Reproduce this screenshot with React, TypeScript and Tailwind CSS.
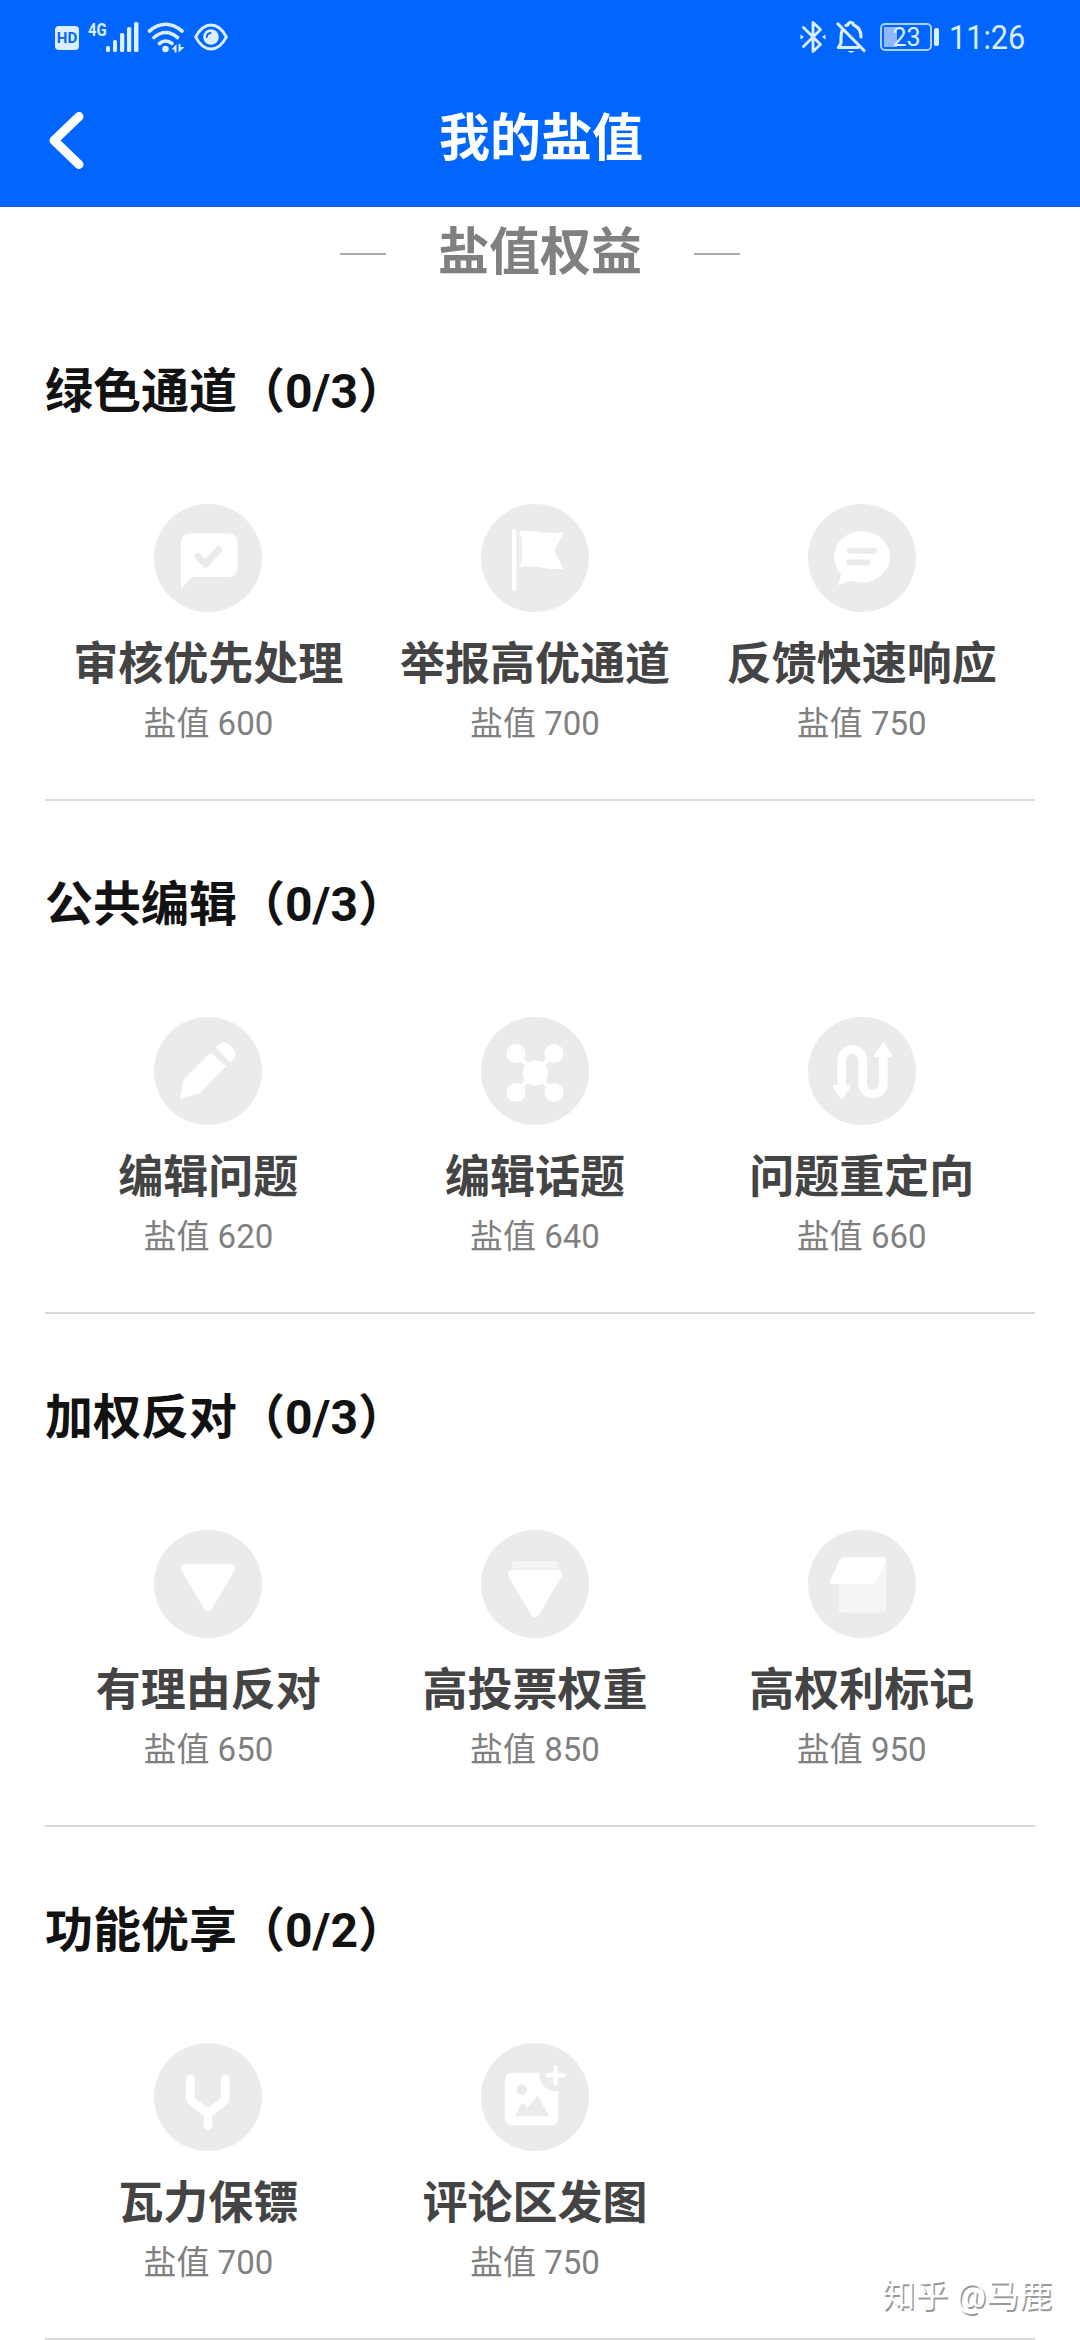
import type { ReactNode } from 'react';

type Privilege = {
  name: string;
  score: number;
  icon: ReactNode;
};

type Group = {
  title: string;
  count: string;
  items: Privilege[];
};

const GREY = '#ebebeb';

const ReviewIcon = (
  <>
    <path d="M35 29.5H75.5a8 8 0 0 1 8 8V65a8 8 0 0 1-8 8H38L28 84q-1 .8-1-1V37.5a8 8 0 0 1 8-8z" fill="#fff" />
    <path d="M44 52.5l7.5 7.5L65 45.5" fill="none" stroke={GREY} strokeWidth="7" strokeLinecap="round" strokeLinejoin="round" />
  </>
);

const FlagIcon = (
  <>
    <rect x="31" y="25" width="4.5" height="62" rx="2.2" fill="#fff" />
    <path d="M38.5 29q0-2 2-2C56 26 66 31 80.5 28.3q2.500-.3 1.300 1.700L73.500 47l8.300 16.500q.8 1.500-1.300 1.600C64 66 56 61 40.500 63q-2 .2-2-1.500z" fill="#fff" />
    <path d="M39.7 32.5V59.5" stroke={GREY} strokeWidth="2" />
  </>
);

const FeedbackIcon = (
  <>
    <ellipse cx="54" cy="52.8" rx="28" ry="25.8" fill="#fff" />
    <path d="M28 63q6 4 4.500 9L30.300 80q-.2 1.500 1.300.9L44 76z" fill="#fff" />
    <path d="M41.5 46.7H66M41.5 58.5H59.5" stroke={GREY} strokeWidth="6" strokeLinecap="round" />
  </>
);

const PencilIcon = (
  <>
    <path d="M57 35.5L72 49.5 47 75Q46 76 44.500 76.500L26 82l3.500-19z" fill="#fff" />
    <path d="M61.5 30.5L64.5 27.5Q69.500 23.500 75 27.500L79.500 32Q83.500 36.500 79.500 42L76 45.500z" fill="#fff" />
  </>
);

const TopicIcon = (
  <>
    <path d="M35 36.5L73 75.5M73 36.5L35 75.5" stroke="#fff" strokeWidth="4.5" />
    <circle cx="54.3" cy="56" r="12.6" fill="#fff" />
    <circle cx="35" cy="36.5" r="9.5" fill="#fff" />
    <circle cx="73" cy="36.5" r="9.5" fill="#fff" />
    <circle cx="35" cy="75.5" r="9.5" fill="#fff" />
    <circle cx="73" cy="75.5" r="9.5" fill="#fff" />
  </>
);

const RedirectIcon = (
  <>
    <path d="M33.7 70V43a10.5 10.5 0 0 1 21 0V66.7a10.3 10.3 0 0 0 20.6 0V38" fill="none" stroke="#fff" strokeWidth="8.7" />
    <path d="M75.3 27l8 12H67.3zM33.7 81l-7.7-12H41.4z" fill="#fff" stroke="#fff" strokeWidth="2.5" strokeLinejoin="round" />
  </>
);

const OpposeIcon = (
  <path d="M31.5 38.2H76.5L54 76.8z" fill="#fff" stroke="#fff" strokeWidth="9" strokeLinejoin="round" />
);

const WeightIcon = (
  <>
    <path d="M34 31H74q3.300 0 3.300 3.500V38.300H30.700V34.500Q30.700 31 34 31z" fill="#f5f5f5" />
    <path d="M31.5 44.3H76.5L54 82.8z" fill="#fff" stroke="#fff" strokeWidth="9" strokeLinejoin="round" />
  </>
);

const MarkIcon = (
  <>
    <path d="M30.7 50L78 30V79a3.7 3.7 0 0 1-3.7 3.7H34.4a3.7 3.7 0 0 1-3.7-3.7z" fill="#f5f5f5" />
    <path d="M36 27.3H75.5Q79 27.3 78 31L68.5 52Q67.5 54 65.5 54H24Q21 54 22 50.5L31.5 30Q33 27.3 36 27.3z" fill="#fff" />
  </>
);

const GuardIcon = (
  <path d="M36.4 36V54.5Q36.4 57.5 38.5 59L54 70.5 69 59Q71.2 57.5 71.2 54.5V36M54 70V83" fill="none" stroke="#fff" strokeWidth="8.6" strokeLinecap="round" />
);

const ImageIcon = (
  <>
    <rect x="24" y="29.7" width="53.3" height="52.6" rx="7" fill="#fff" />
    <circle cx="74.5" cy="32.3" r="16" fill={GREY} />
    <circle cx="41" cy="46.7" r="5.2" fill={GREY} />
    <path d="M34.8 72.7L41.5 60l5 5.5L56.7 53.3 67.4 72.7z" fill={GREY} stroke={GREY} strokeLinejoin="round" />
    <path d="M74.5 24.5V40.2M66.8 32.3H82.2" stroke="#fff" strokeWidth="4.5" strokeLinecap="round" />
  </>
);

const groups: Group[] = [
  {
    title: '绿色通道',
    count: '0/3',
    items: [
      { name: '审核优先处理', score: 600, icon: ReviewIcon },
      { name: '举报高优通道', score: 700, icon: FlagIcon },
      { name: '反馈快速响应', score: 750, icon: FeedbackIcon },
    ],
  },
  {
    title: '公共编辑',
    count: '0/3',
    items: [
      { name: '编辑问题', score: 620, icon: PencilIcon },
      { name: '编辑话题', score: 640, icon: TopicIcon },
      { name: '问题重定向', score: 660, icon: RedirectIcon },
    ],
  },
  {
    title: '加权反对',
    count: '0/3',
    items: [
      { name: '有理由反对', score: 650, icon: OpposeIcon },
      { name: '高投票权重', score: 850, icon: WeightIcon },
      { name: '高权利标记', score: 950, icon: MarkIcon },
    ],
  },
  {
    title: '功能优享',
    count: '0/2',
    items: [
      { name: '瓦力保镖', score: 700, icon: GuardIcon },
      { name: '评论区发图', score: 750, icon: ImageIcon },
    ],
  },
];

function StatusBar() {
  return (
    <div className="flex h-[74px] items-center justify-between pl-[55px] pr-[54px] text-[#dcefff]">
      <div className="flex items-center">
        <div className="mt-[2px] flex h-6 w-6 items-center justify-center rounded-[4px] bg-[#dcefff] text-[15px] leading-none font-bold text-[#0066ff]">
          HD
        </div>
        <span className="-mt-4 ml-[9px] w-[18px] origin-left scale-x-[0.78] text-[19px] leading-none font-bold">4G</span>
        <svg width="33" height="32" viewBox="0 0 33 32" fill="currentColor">
          <rect x="0" y="25" width="4" height="6" rx="1.5" />
          <rect x="7" y="19" width="4" height="12" rx="1.5" />
          <rect x="14" y="12" width="4.3" height="19" rx="1.5" />
          <rect x="21" y="6" width="4.3" height="25" rx="1.5" />
          <rect x="28" y="1" width="4.5" height="30" rx="1.5" />
        </svg>
        <svg className="ml-2" width="38" height="32" viewBox="0 0 38 32" fill="none" stroke="currentColor" strokeWidth="3.6" strokeLinecap="round">
          <path d="M2.5 10Q18.5-3.5 35 10M7 16.5Q18.5 6.5 30.5 16.5M12.5 22.5Q18.5 17.5 25 22.5" />
          <circle cx="18.5" cy="28" r="3.3" fill="currentColor" stroke="none" />
          <path d="M24.5 28.5L29.5 23V31.5H27.5V28.5zM31.5 23H33.5V26H37.5L31.5 31.5z" fill="currentColor" stroke="none" />
        </svg>
        <svg className="ml-[9px]" width="34" height="28" viewBox="0 0 34 28" fill="none" stroke="currentColor" strokeWidth="2.8">
          <path d="M1.6 14Q8 2 17 2T32.4 14Q26 26 17 26T1.6 14z" strokeLinejoin="round" />
          <circle cx="17" cy="14" r="7.8" fill="currentColor" stroke="none" />
          <path d="M12.8 14Q13 10.5 16.5 10" stroke="#0066ff" strokeWidth="1.8" strokeLinecap="round" />
        </svg>
      </div>

      <div className="flex items-center">
        <svg width="26" height="34" viewBox="0 0 26 34" fill="none" stroke="currentColor" strokeWidth="2.8" strokeLinejoin="round" strokeLinecap="round">
          <path d="M3.5 7.5L20.5 24.5 13 31.5V2.5L20.5 9.5 3.5 26.5" />
          <path d="M.5 14.5L4 17 .5 19.5zM25.5 14.5L22 17l3.500 2.500z" fill="currentColor" stroke="none" />
        </svg>
        <svg className="ml-2.5" width="30" height="34" viewBox="0 0 30 34" fill="none" stroke="currentColor" strokeWidth="3.2" strokeLinecap="round" strokeLinejoin="round">
          <path d="M2 4L28 30.5M6 11Q5 14 5 19V23L2.5 27.5H22M10 5.5Q12.5 5 12.500 3.500 14.500 1 17 3.500 17 5 19.500 6 25 9 25 17" />
          <path d="M11.5 31H18.5Q15 34.5 11.5 31z" fill="currentColor" stroke="none" />
        </svg>
        <div className="relative ml-3.5 flex h-7 w-[52px] items-center justify-center rounded-[5px] border-2 border-[#a9d0ff]">
          <div className="absolute top-0.5 bottom-0.5 left-0.5 w-[13px] bg-[#8fb8ff]" />
          <span className="relative pl-px text-[25px] leading-none">23</span>
        </div>
        <div className="ml-[2px] h-[18px] w-[5px] rounded-[2px] bg-[#dcefff]" />
        <span className="ml-2.5 w-[77px] origin-left scale-x-[0.9] text-[34px] leading-none">11:26</span>
      </div>
    </div>
  );
}

function PrivilegeItem({ item }: { item: Privilege }) {
  return (
    <div className="flex flex-col items-center">
      <svg width="108" height="108" viewBox="0 0 108 108">
        <circle cx="54" cy="54" r="54" fill={GREY} />
        {item.icon}
      </svg>
      <div className="mt-[29px] text-[45px] leading-[48px] font-bold whitespace-nowrap text-[#444444]">{item.name}</div>
      <div className="mt-[15px] text-[33px] leading-[40px] text-[#808080]">盐值 {item.score}</div>
    </div>
  );
}

function PrivilegeGroup({ group }: { group: Group }) {
  return (
    <section className="h-[513px] border-b-2 border-[#d9d9d9] pt-[76px]">
      <h2 className="text-[48px] leading-[56px] font-bold text-[#121212]">
        {group.title}（{group.count}）
      </h2>
      <div className="mt-[84px] grid w-[980px] grid-cols-3">
        {group.items.map((item) => (
          <PrivilegeItem key={item.name} item={item} />
        ))}
      </div>
    </section>
  );
}

export default function App() {
  return (
    <div className="relative h-[2340px] w-[1080px] overflow-hidden bg-white font-[Roboto,'Noto_Sans_CJK_SC',sans-serif]">
      <header className="h-[207px] border-b border-[#2a62c0] bg-[#0066ff]">
        <StatusBar />
        <div className="grid h-[132px] grid-cols-3 items-center pr-[47px] pl-[49px]">
          <svg width="36" height="58" viewBox="0 0 36 58" fill="none" stroke="#fff" strokeWidth="9" strokeLinecap="round" strokeLinejoin="round">
            <path d="M30 5.5L5 29.5 30 53.5" />
          </svg>
          <h1 className="pb-[3px] text-center text-[51px] leading-none font-bold text-white">我的盐值</h1>
        </div>
      </header>

      <main className="px-[45px]">
        <div className="flex h-[81px] items-center justify-center gap-[52px] pt-2.5">
          <span className="mt-[3px] h-[2px] w-[46px] bg-[#aaaaaa]" />
          <span className="text-[51px] leading-none font-bold text-[#808080]">盐值权益</span>
          <span className="mt-[3px] h-[2px] w-[46px] bg-[#aaaaaa]" />
        </div>
        {groups.map((group) => (
          <PrivilegeGroup key={group.title} group={group} />
        ))}
      </main>

      <div className="absolute right-[28px] bottom-[28px] text-[33px] leading-none text-white [text-shadow:1.5px_1.5px_0.5px_#999]">知乎 @马鹿</div>
    </div>
  );
}
